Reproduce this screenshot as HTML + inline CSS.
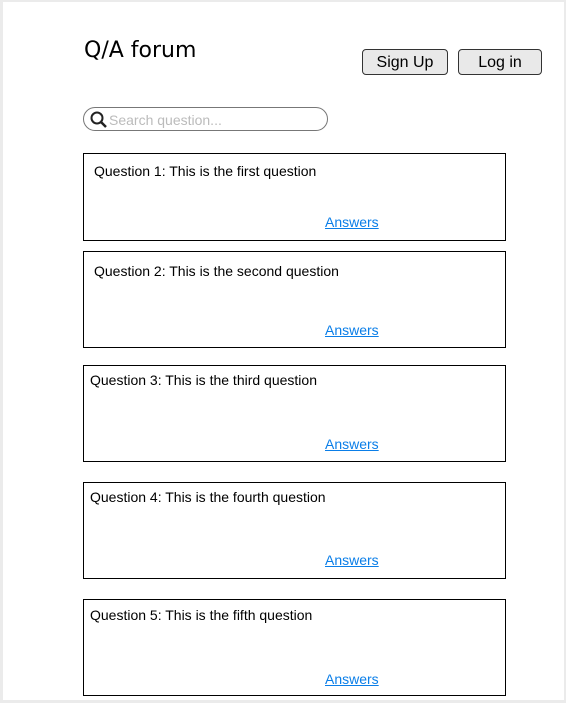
<!DOCTYPE html>
<html><head><style>
*{margin:0;padding:0;box-sizing:border-box}
body{width:566px;height:703px;background:#ebebeb;position:relative;overflow:hidden;font-family:"Liberation Sans",sans-serif}
.page{position:absolute;left:3px;top:2px;width:561px;height:698px;background:#fff}
.abs{position:absolute}
h1{position:absolute;left:84px;top:37px;font-family:"DejaVu Sans",sans-serif;font-weight:normal;font-size:22px;color:#000;line-height:28px}
.btn{position:absolute;top:49px;height:26px;border:1px solid #333;border-radius:4px;background:#e9e9e9;font-size:16px;text-align:center;line-height:26px;color:#000}
.search{position:absolute;left:83px;top:107px;width:245px;height:24px;border:1px solid #777;border-radius:12px}
.search span{position:absolute;left:25px;top:4px;font-size:14px;color:#bbb}
.card{position:absolute;left:83px;width:423px;border:1px solid #000;background:#fff}
.q{position:absolute;font-size:14px;color:#000;white-space:nowrap}
.a{position:absolute;left:241px;font-size:14px;color:#0a7ee8;text-decoration:underline}
</style></head><body>
<div class="page"></div>
<h1>Q/A forum</h1>
<div class="btn" style="left:362px;width:86px">Sign Up</div>
<div class="btn" style="left:458px;width:84px">Log in</div>
<div class="search">
<svg class="abs" style="left:5px;top:2px" width="20" height="20" viewBox="0 0 20 20"><circle cx="8" cy="8" r="5.5" fill="none" stroke="#222" stroke-width="2"/><line x1="12" y1="12" x2="17" y2="17" stroke="#222" stroke-width="2.5"/></svg>
<span>Search question...</span></div>

<div class="card" style="top:153px;height:88px"><div class="q" style="left:10px;top:9px">Question 1: This is the first question</div><div class="a" style="top:60px">Answers</div></div>
<div class="card" style="top:251px;height:97px"><div class="q" style="left:10px;top:11px">Question 2: This is the second question</div><div class="a" style="top:70px">Answers</div></div>
<div class="card" style="top:365px;height:97px"><div class="q" style="left:6px;top:6px">Question 3: This is the third question</div><div class="a" style="top:70px">Answers</div></div>
<div class="card" style="top:482px;height:97px"><div class="q" style="left:6px;top:6px">Question 4: This is the fourth question</div><div class="a" style="top:69px">Answers</div></div>
<div class="card" style="top:599px;height:97px"><div class="q" style="left:6px;top:7px">Question 5: This is the fifth question</div><div class="a" style="top:71px">Answers</div></div>
</body></html>
